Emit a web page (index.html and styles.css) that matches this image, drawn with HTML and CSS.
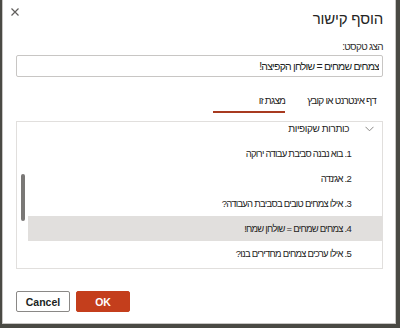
FILE: index.html
```html
<!DOCTYPE html>
<html lang="he">
<head>
    <meta charset="UTF-8">
    <meta name="viewport" content="width=device-width, initial-scale=1.0">
    <title>הוסף קישור</title>
    <link rel="stylesheet" href="styles.css">
</head>
<body>
    <div class="dialog" dir="rtl">
        <button class="close" aria-label="סגור">
            <svg width="8" height="8" viewBox="0 0 8 8"><path d="M0.5 0.5 L7.5 7.5 M7.5 0.5 L0.5 7.5" stroke="#605e5c" stroke-width="1.2" fill="none"/></svg>
        </button>

        <h1 class="title">הוסף קישור</h1>

        <label class="label" for="linkText">הצג טקסט:</label>
        <input class="text-input" id="linkText" type="text" value="צמחים שמחים = שולחן הקפיצה!">

        <div class="tabs">
            <div class="tab">דף אינטרנט או קובץ</div>
            <div class="tab active">מצגת זו</div>
        </div>

        <div class="list">
            <div class="list-head">
                <svg class="chevron" width="9" height="6" viewBox="0 0 9 6"><path d="M0.5 0.8 L4.5 4.8 L8.5 0.8" stroke="#8a8886" stroke-width="1" fill="none"/></svg>
                <span>כותרות שקופיות</span>
            </div>
            <div class="row">1. בוא נבנה סביבת עבודה ירוקה</div>
            <div class="row">2. אג'נדה</div>
            <div class="row">3. אילו צמחים טובים בסביבת העבודה?</div>
            <div class="row selected">4. צמחים שמחים = שולחן שמח!</div>
            <div class="row">5. אילו ערכים צמחים מחדירים בנו?</div>
            <div class="scrollbar"></div>
        </div>

        <div class="actions">
            <button class="btn primary">OK</button>
            <button class="btn">Cancel</button>
        </div>
    </div>
</body>
</html>
```

FILE: styles.css
```css
body {
    margin: 0;
    height: 328px;
    background: #4a4a44;
    font-family: "Liberation Sans", "DejaVu Sans", sans-serif;
    color: #252423;
    overflow: hidden;
}
.dialog {
    position: relative;
    box-sizing: border-box;
    width: 394px;
    height: 324px;
    margin-left: 2px;
    padding: 9px 12px 0 13px;
    background: #fff;
    border: 1px solid #c8c6c4;
    border-top: none;
    display: flex;
    flex-direction: column;
}
.close {
    position: absolute;
    left: 8px;
    top: 8px;
    padding: 0;
    border: none;
    background: none;
    line-height: 0;
}
.title {
    margin: 0;
    font-size: 15px;
    font-weight: normal;
    line-height: 20px;
    letter-spacing: -0.2px;
}
.label {
    margin-top: 11px;
    font-size: 10px;
    line-height: 14px;
    letter-spacing: -0.7px;
    color: #323130;
}
.text-input {
    box-sizing: border-box;
    height: 22px;
    margin-top: 1px;
    padding: 0 3px;
    border: 1px solid #c8c6c4;
    border-radius: 2px;
    font-family: inherit;
    font-size: 10.5px;
    letter-spacing: -0.8px;
    color: #201f1e;
    direction: rtl;
    text-align: right;
}
.tabs {
    display: flex;
    gap: 22px;
    margin-top: 17px;
    padding-right: 7px;
}
.tab {
    font-size: 10px;
    line-height: 14px;
    letter-spacing: -0.8px;
    padding-bottom: 3px;
    border-bottom: 2px solid transparent;
}
.tab.active {
    width: 72px;
    border-bottom-color: #a83a20;
}
.list {
    position: relative;
    margin-top: 8px;
    height: 148px;
    border: 1px solid #e1dfdd;
    box-sizing: border-box;
}
.list-head {
    display: flex;
    align-items: center;
    gap: 16px;
    height: 13px;
    padding-right: 8px;
    font-size: 10px;
    letter-spacing: -0.4px;
}
.row {
    height: 25px;
    line-height: 25px;
    margin-left: 11px;
    padding-right: 31px;
    font-size: 9.5px;
    letter-spacing: -0.75px;
}
.list-head + .row {
    margin-top: 6px;
}
.row.selected {
    background: #e1dfdd;
}
.scrollbar {
    position: absolute;
    left: 4px;
    top: 52px;
    width: 4px;
    height: 47px;
    border-radius: 2px;
    background: #7a7876;
}
.actions {
    display: flex;
    flex-direction: row-reverse;
    justify-content: flex-end;
    direction: ltr;
    gap: 6px;
    margin-top: 22px;
}
.btn {
    box-sizing: border-box;
    width: 54px;
    height: 21px;
    padding: 0;
    border: 1px solid #8a8886;
    border-radius: 2px;
    background: #fff;
    font-family: inherit;
    font-size: 10.5px;
    font-weight: bold;
    color: #201f1e;
}
.btn.primary {
    background: #c43e1c;
    border-color: #c43e1c;
    color: #fff;
}
```
